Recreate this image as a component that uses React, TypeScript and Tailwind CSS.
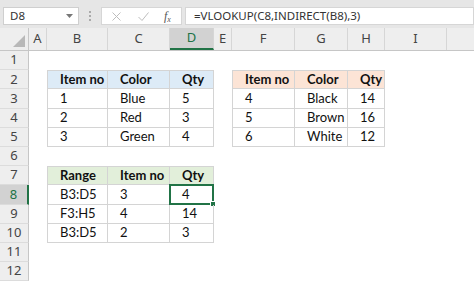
import React from "react";

type Col = { key: string; w: string };

const COLS: Col[] = [
  { key: "A", w: "w-[18px]" },
  { key: "B", w: "w-[61px]" },
  { key: "C", w: "w-[62px]" },
  { key: "D", w: "w-[44px]" },
  { key: "E", w: "w-[18px]" },
  { key: "F", w: "w-[63px]" },
  { key: "G", w: "w-[53px]" },
  { key: "H", w: "w-[37px]" },
  { key: "I", w: "w-[62px]" },
  { key: "J", w: "w-[40px]" },
];

type Table = {
  cols: string[];
  rows: number[];
  head: string;
  data: string[][];
};

const TABLES: Table[] = [
  {
    cols: ["B", "C", "D"],
    rows: [2, 3, 4, 5],
    head: "bg-[#ddebf7]",
    data: [
      ["Item no", "Color", "Qty"],
      ["1", "Blue", "5"],
      ["2", "Red", "3"],
      ["3", "Green", "4"],
    ],
  },
  {
    cols: ["F", "G", "H"],
    rows: [2, 3, 4, 5],
    head: "bg-[#fce4d6]",
    data: [
      ["Item no", "Color", "Qty"],
      ["4", "Black", "14"],
      ["5", "Brown", "16"],
      ["6", "White", "12"],
    ],
  },
  {
    cols: ["B", "C", "D"],
    rows: [7, 8, 9, 10],
    head: "bg-[#e2efda]",
    data: [
      ["Range", "Item no", "Qty"],
      ["B3:D5", "3", "4"],
      ["F3:H5", "4", "14"],
      ["B3:D5", "2", "3"],
    ],
  },
];

function findCell(col: string, row: number) {
  for (const t of TABLES) {
    const c = t.cols.indexOf(col);
    const r = t.rows.indexOf(row);
    if (c >= 0 && r >= 0) {
      return { t, c, r, text: t.data[r][c] };
    }
  }
  return null;
}

function FormulaBar() {
  return (
    <div className="flex h-[28px] items-start bg-[#e6e6e6] pl-[3px] pt-[7px] font-['Noto_Sans',sans-serif] text-[11.5px] text-[#333]">
      <div className="flex h-[18px] w-[76px] items-center justify-between border border-[#cfcfcf] bg-white pl-[6px] pr-[5px]">
        <span>D8</span>
        <svg width="7" height="4" viewBox="0 0 7 4">
          <path d="M0 0h7L3.5 4z" fill="#777" />
        </svg>
      </div>
      <div className="flex w-[22px] flex-col items-center gap-[2px] pt-[4px]">
        <span className="h-[2px] w-[2px] bg-[#aaa]" />
        <span className="h-[2px] w-[2px] bg-[#aaa]" />
        <span className="h-[2px] w-[2px] bg-[#aaa]" />
      </div>
      <div className="flex h-[18px] w-[81px] items-center border border-[#d6d6d6] bg-white">
        <svg className="ml-[10px]" width="9" height="9" viewBox="0 0 9 9">
          <path d="M0.5 0.5l8 8M8.5 0.5l-8 8" stroke="#bdbdbd" strokeWidth="1" />
        </svg>
        <svg className="ml-[17px]" width="11" height="9" viewBox="0 0 11 9">
          <path d="M0.5 5l3.5 3.5L10.5 0.5" stroke="#bdbdbd" strokeWidth="1" fill="none" />
        </svg>
        <span className="ml-[15px] font-['Liberation_Serif',serif] text-[12px] italic text-[#555]">
          f<sub className="text-[8px]">x</sub>
        </span>
      </div>
      <div className="ml-[3px] flex h-[18px] flex-1 items-center border border-[#d6d6d6] bg-white pl-[8px]">
        =VLOOKUP(C8,INDIRECT(B8),3)
      </div>
    </div>
  );
}

function ColumnHeaders() {
  return (
    <div className="flex h-[23px] border-b border-[#c6c6c6] bg-[#eeeeee] font-['Noto_Sans',sans-serif] text-[13px] text-[#444]">
      <div className="relative w-[29px] shrink-0 border-r border-[#c6c6c6]">
        <svg className="absolute bottom-[3px] right-[3px]" width="12" height="12" viewBox="0 0 12 12">
          <path d="M12 0V12H0z" fill="#b8b8b8" />
        </svg>
      </div>
      {COLS.map((c) => (
        <div
          key={c.key}
          className={`${c.w} flex shrink-0 items-center justify-center border-r border-[#d6d6d6] ${
            c.key === "D" ? "border-b-2 border-b-[#217346] bg-[#d2d2d2] text-[#217346]" : ""
          }`}
        >
          {c.key === "J" ? "" : c.key}
        </div>
      ))}
    </div>
  );
}

function SheetRow({ row }: { row: number }) {
  const active = row === 8;
  return (
    <div className="flex h-[19.2px]">
      <div
        className={`flex w-[29px] shrink-0 items-center justify-center border-b border-[#dcdcdc] font-['Noto_Sans',sans-serif] text-[13px] ${
          active
            ? "border-r-2 border-r-[#217346] bg-[#d2d2d2] text-[#217346]"
            : "border-r border-r-[#c6c6c6] bg-[#eeeeee] text-[#444]"
        }`}
      >
        {row}
      </div>
      {COLS.map((c) => {
        const cell = findCell(c.key, row);
        if (!cell) return <div key={c.key} className={`${c.w} shrink-0`} />;
        const first = cell.c === 0;
        const head = cell.r === 0;
        const sel = c.key === "D" && row === 8;
        return (
          <div
            key={c.key}
            className={`${c.w} relative flex shrink-0 items-center border-b border-r border-[#d4d4d4] pl-3 text-[13px] text-[#111] ${
              first ? "border-l" : ""
            } ${head ? `border-t font-bold ${cell.t.head}` : ""}`}
          >
            {cell.text}
            {sel && (
              <div className="absolute -left-[1px] -top-[1px] bottom-[-1px] right-[-1px] border-2 border-[#217346]">
                <div className="absolute -bottom-[4px] -right-[4px] h-[6px] w-[6px] border border-white bg-[#217346]" />
              </div>
            )}
          </div>
        );
      })}
    </div>
  );
}

export default function App() {
  const rows = [1, 2, 3, 4, 5, 6, 7, 8, 9, 10, 11, 12];
  return (
    <div className="h-[283px] w-[474px] overflow-hidden bg-white font-['Lato',sans-serif]">
      <FormulaBar />
      <ColumnHeaders />
      {rows.map((r) => (
        <SheetRow key={r} row={r} />
      ))}
    </div>
  );
}
